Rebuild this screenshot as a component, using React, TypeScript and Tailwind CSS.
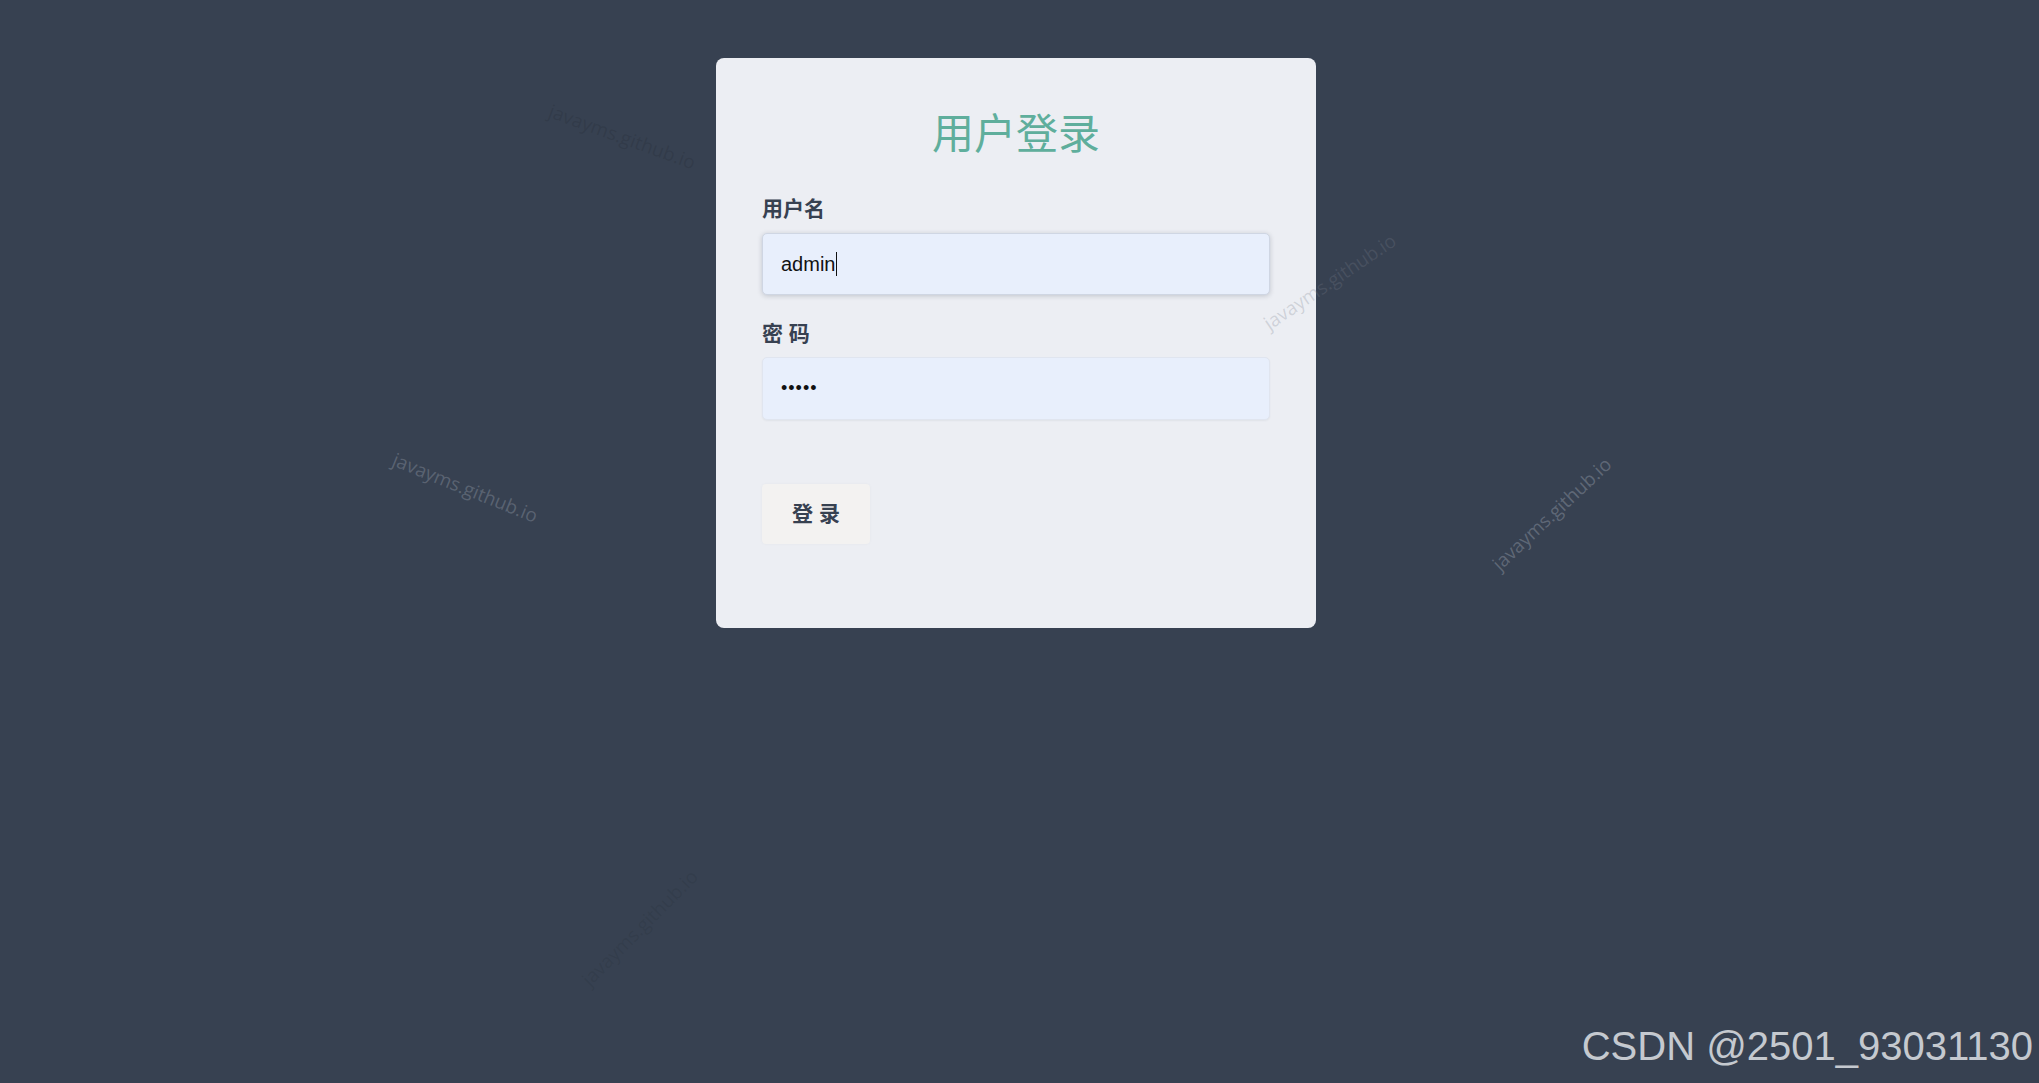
import React from "react"

const cjk = "font-['Liberation_Sans','Noto_Sans_CJK_SC',sans-serif]"

type Mark = { x: number; y: number; deg: number; color: string }

// faint "javayms.github.io" stamps scattered over the page
const marks: Mark[] = [
  { x: 465, y: 488, deg: 22, color: "rgba(140,148,160,0.42)" },
  { x: 622, y: 137, deg: 20, color: "rgba(30,36,46,0.2)" },
  { x: 1330, y: 282, deg: -34, color: "rgba(120,128,140,0.26)" },
  { x: 1552, y: 514, deg: -43, color: "rgba(140,148,160,0.48)" },
  { x: 640, y: 928, deg: -45, color: "rgba(30,36,46,0.14)" },
]

function Watermark({ x, y, deg, color }: Mark) {
  return (
    <div
      className="pointer-events-none absolute whitespace-nowrap font-['Open_Sans',sans-serif] text-[19px] leading-none"
      style={{ left: x, top: y, color, transform: `translate(-50%,-50%) rotate(${deg}deg)` }}
    >
      javayms.github.io
    </div>
  )
}

export default function App() {
  return (
    <div className={`relative min-h-screen w-full overflow-hidden bg-[#374151] ${cjk}`}>
      <div className="flex justify-center pt-[58px] pr-[7px]">
        <div className="flex w-[600px] flex-col rounded-lg bg-[#eceef3] px-[46px] pt-[51px] pb-[84px]">
          <h1 className="text-center text-[42px] font-normal leading-[52px] text-[#5fae9c]">
            用户登录
          </h1>

          <label className="mt-[35px] text-[21px] font-bold leading-[26px] text-[#374151]">
            用户名
          </label>
          <div className="mt-[11px] flex h-[62px] items-center rounded-[5px] border border-[#cfd6e3] bg-[#e8effc] px-[18px] text-[20px] text-[#111] shadow-[0_1px_5px_rgba(40,50,70,0.22)]">
            admin
            <span className="ml-px inline-block h-[24px] w-px bg-[#111]" />
          </div>

          <label className="mt-[26px] text-[21px] font-bold leading-[26px] text-[#374151]">
            密 码
          </label>
          <div className="mt-[10px] flex h-[63px] items-center rounded-[5px] border border-[#e0e5ef] bg-[#e8effc] px-[18px] text-[18px] tracking-[1px] text-[#111] shadow-[0_1px_2px_rgba(40,50,70,0.06)]">
            •••••
          </div>

          <div className="mt-[64px] flex">
            <button className="h-[60px] w-[108px] rounded-[4px] bg-[#f3f2f1] text-[21px] font-bold text-[#374151] shadow-[0_0_3px_rgba(0,0,0,0.04)]">
              登 录
            </button>
          </div>
        </div>
      </div>

      {marks.map((m, i) => (
        <Watermark key={i} {...m} />
      ))}

      <div className="pointer-events-none absolute right-[6px] bottom-[17px] font-['Liberation_Sans',sans-serif] text-[40px] leading-none text-[#c5c9cf]">
        CSDN @2501_93031130
      </div>
    </div>
  )
}
